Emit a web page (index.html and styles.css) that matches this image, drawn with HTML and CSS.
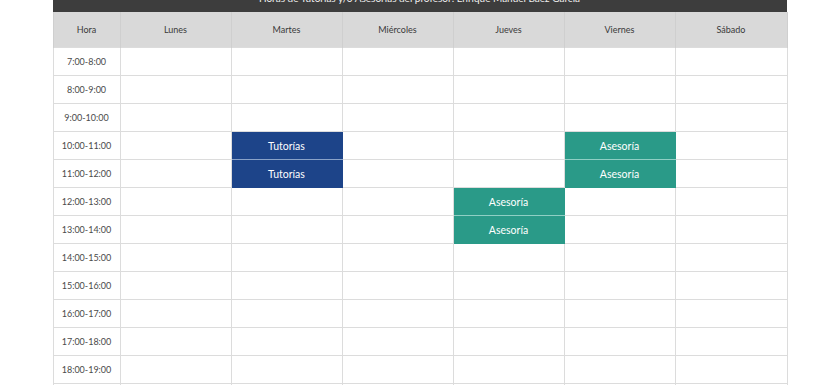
FILE: index.html
```html
<!DOCTYPE html>
<html lang="es">
<head>
<meta charset="utf-8">
<title>Horario</title>
<link rel="stylesheet" href="styles.css">
</head>
<body>
<div class="wrap">
  <div class="title">Horas de Tutorías y/o Asesorías del profesor: Enrique Manuel Báez García</div>
  <table class="sched">
    <colgroup>
      <col class="c-hora"><col class="c-day"><col class="c-day"><col class="c-day"><col class="c-day"><col class="c-day"><col class="c-sat">
    </colgroup>
    <thead>
      <tr><th>Hora</th><th>Lunes</th><th>Martes</th><th>Miércoles</th><th>Jueves</th><th>Viernes</th><th>Sábado</th></tr>
    </thead>
    <tbody>
      <tr><td>7:00-8:00</td><td></td><td></td><td></td><td></td><td></td><td></td></tr>
      <tr><td>8:00-9:00</td><td></td><td></td><td></td><td></td><td></td><td></td></tr>
      <tr><td>9:00-10:00</td><td></td><td></td><td></td><td></td><td></td><td></td></tr>
      <tr><td>10:00-11:00</td><td></td><td class="tut first">Tutorías</td><td></td><td></td><td class="ase first">Asesoría</td><td></td></tr>
      <tr><td>11:00-12:00</td><td></td><td class="tut next">Tutorías</td><td></td><td></td><td class="ase next">Asesoría</td><td></td></tr>
      <tr><td>12:00-13:00</td><td></td><td></td><td></td><td class="ase first">Asesoría</td><td></td><td></td></tr>
      <tr><td>13:00-14:00</td><td></td><td></td><td></td><td class="ase next">Asesoría</td><td></td><td></td></tr>
      <tr><td>14:00-15:00</td><td></td><td></td><td></td><td></td><td></td><td></td></tr>
      <tr><td>15:00-16:00</td><td></td><td></td><td></td><td></td><td></td><td></td></tr>
      <tr><td>16:00-17:00</td><td></td><td></td><td></td><td></td><td></td><td></td></tr>
      <tr><td>17:00-18:00</td><td></td><td></td><td></td><td></td><td></td><td></td></tr>
      <tr><td>18:00-19:00</td><td></td><td></td><td></td><td></td><td></td><td></td></tr>
      <tr><td>19:00-20:00</td><td></td><td></td><td></td><td></td><td></td><td></td></tr>
    </tbody>
  </table>
</div>
</body>
</html>
```
FILE: styles.css
```css
html, body {
  margin: 0;
  padding: 0;
  background: #ffffff;
  overflow: hidden;
}
body {
  font-family: Lato, "Open Sans", "Liberation Sans", sans-serif;
  color: #444;
}
.wrap {
  width: 735px;
  margin: -18px auto 0;
}
.title {
  height: 30px;
  box-sizing: border-box;
  padding-top: 1px;
  line-height: 30px;
  background: #3d3d3d;
  color: #f0f0f0;
  font-size: 10px;
  text-align: center;
  width: 734px;
  overflow: hidden;
}
.sched {
  width: 735px;
  table-layout: fixed;
  border-collapse: collapse;
  font-size: 9px;
}
.c-hora { width: 67px; }
.c-day { width: 111px; }
.c-sat { width: 112px; }
.sched th {
  height: 35px;
  padding: 0;
  background: #d9d9d9;
  font-weight: normal;
  color: #3a3a3a;
  border-left: 1px solid #cfcfcf;
  border-right: 1px solid #cfcfcf;
}
.sched td {
  height: 27px;
  padding: 0;
  text-align: center;
  border: 1px solid #dcdcdc;
  color: #4a4a4a;
}
.sched td.tut,
.sched td.ase {
  color: #ffffff;
  font-size: 10.5px;
}
.sched td.tut {
  background: #1d4489;
  border-color: #1d4489;
}
.sched td.ase {
  background: #2a9a88;
  border-color: #2a9a88;
}
.sched td.tut.first { border-bottom-color: #8aa2c8; }
.sched td.tut.next { border-top-color: #8aa2c8; }
.sched td.ase.first { border-bottom-color: #8fcfc4; }
.sched td.ase.next { border-top-color: #8fcfc4; }
```
